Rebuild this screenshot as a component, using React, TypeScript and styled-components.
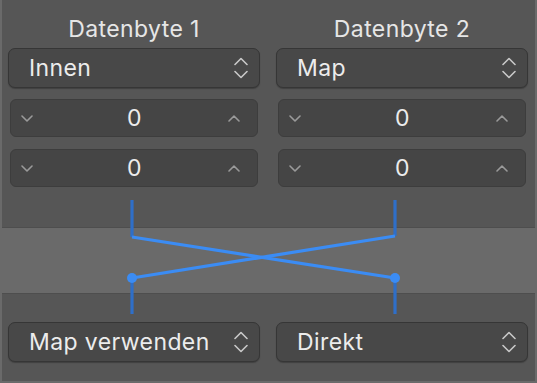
import React from "react";
import styled, { createGlobalStyle } from "styled-components";

const GlobalStyle = createGlobalStyle`
    body {
        margin: 0;
        background: #565656;
        font-family: Inter, "Noto Sans", "Liberation Sans", sans-serif;
    }
`;

const Panel = styled.div`
    box-sizing: border-box;
    width: 537px;
    height: 383px;
    background: #565656;
    border: 2px solid #6a6a6a;
    border-top: none;
    display: flex;
    flex-direction: column;
    color: #ececec;
    font-size: 23px;
    letter-spacing: 0.4px;
`;

const Columns = styled.div`
    display: grid;
    grid-template-columns: 252px 252px;
    column-gap: 16px;
    padding: 0 7px 0 6px;
`;

const Column = styled.div`
    display: flex;
    flex-direction: column;
`;

const Title = styled.div`
    height: 28px;
    margin: 15px 0 5px;
    line-height: 28px;
    text-align: center;
    color: #e6e6e6;
`;

const PopUp = styled.div`
    box-sizing: border-box;
    height: 40px;
    border-radius: 7px;
    background: #484848;
    border: 1px solid #363636;
    box-shadow: 0 1px 1px rgba(0, 0, 0, 0.25);
    display: flex;
    align-items: center;
    justify-content: space-between;
    padding: 0 11px 0 20px;
`;

const Stepper = styled.div<{ $top: number }>`
    box-sizing: border-box;
    height: 38px;
    margin: ${p => p.$top}px 2px 0;
    border-radius: 6px;
    background: #454545;
    border: 1px solid #3d3d3d;
    display: grid;
    grid-template-columns: 20px 1fr 20px;
    align-items: center;
    padding: 0 9px 0 10px;
`;

const Value = styled.span`
    text-align: center;
`;

const Mapper = styled.div`
    position: relative;
    height: 135px;
`;

const Band = styled.div`
    margin-top: 40px;
    height: 67px;
    box-sizing: border-box;
    background: #6a6a6a;
    border-top: 1px solid #4e4e4e;
    border-bottom: 1px solid #4e4e4e;
`;

const Wires = styled.svg`
    position: absolute;
    left: 0;
    top: 0;
    width: 533px;
    height: 135px;
`;

const UpDown = () => (
    <svg width="14" height="22" viewBox="0 0 14 22">
        <path d="M1 7.5 L7 1.5 L13 7.5 M1 14.5 L7 20.5 L13 14.5" fill="none" stroke="#c9c9c9" strokeWidth="1.6" strokeLinecap="round" strokeLinejoin="round" />
    </svg>
);

const Chevron = ({ up }: { up?: boolean }) => (
    <svg width="12" height="7" viewBox="0 0 12 7">
        <path d={up ? "M1 6 L6 1 L11 6" : "M1 1 L6 6 L11 1"} fill="none" stroke="#9a9a9a" strokeWidth="1.6" strokeLinecap="round" strokeLinejoin="round" />
    </svg>
);

const Select = ({ label }: { label: string }) => (
    <PopUp>
        <span>{label}</span>
        <UpDown />
    </PopUp>
);

const Field = ({ top }: { top: number }) => (
    <Stepper $top={top}>
        <Chevron />
        <Value>0</Value>
        <Chevron up />
    </Stepper>
);

const byteColumns = [
    { title: "Datenbyte 1", mode: "Innen" },
    { title: "Datenbyte 2", mode: "Map" },
];

export default function App() {
    const lx = 130;
    const rx = 393;
    return <>
        <GlobalStyle />
        <Panel>
            <Columns>
                {byteColumns.map(col => <Column key={col.title}>
                    <Title>{col.title}</Title>
                    <Select label={col.mode} />
                    <Field top={11} />
                    <Field top={12} />
                </Column>)}
            </Columns>
            <Mapper>
                <Band />
                <Wires viewBox="0 0 533 135">
                    <g stroke="#2f6fc8" strokeWidth="3.2">
                        <line x1={lx} y1={13} x2={lx} y2={50} />
                        <line x1={rx} y1={13} x2={rx} y2={49} />
                        <line x1={lx} y1={91} x2={lx} y2={127} />
                        <line x1={rx} y1={91} x2={rx} y2={127} />
                    </g>
                    <g stroke="#3b8cf4" strokeWidth="3.2">
                        <line x1={lx} y1={50} x2={rx} y2={91} />
                        <line x1={rx} y1={49} x2={lx} y2={91} />
                    </g>
                    <circle cx={lx} cy={91} r={5} fill="#3b8cf4" />
                    <circle cx={rx} cy={91} r={5} fill="#3b8cf4" />
                </Wires>
            </Mapper>
            <Columns>
                <Select label="Map verwenden" />
                <Select label="Direkt" />
            </Columns>
        </Panel>
    </>;
}
